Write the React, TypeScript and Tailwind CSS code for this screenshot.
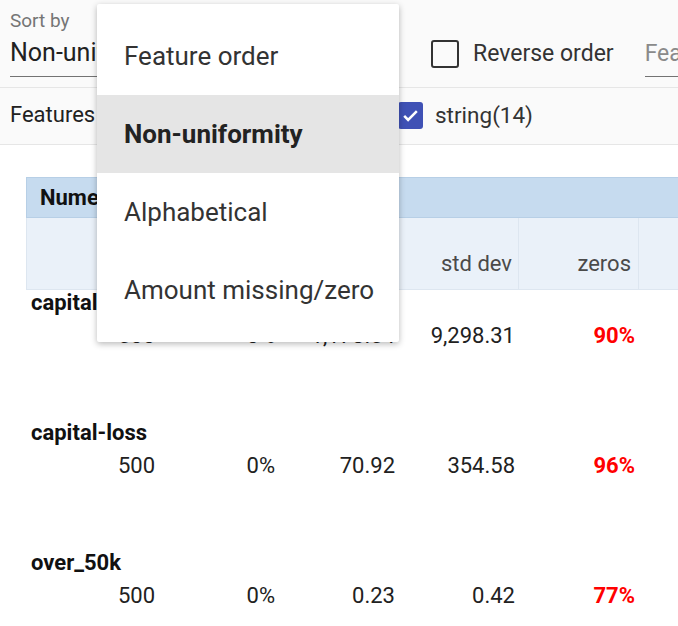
import React from "react";

const font = { fontFamily: "Roboto, 'Noto Sans', Arial, sans-serif" };

function Box({ checked }: { checked?: boolean }) {
  if (checked) {
    return (
      <div className="w-[25px] h-[27px] shrink-0 rounded-[3px] bg-[#3f51b5] flex items-center justify-center">
        <svg width="19" height="19" viewBox="0 0 24 24">
          <path d="M4 12.5l5 5L20 6.5" fill="none" stroke="#fff" strokeWidth="3.2" />
        </svg>
      </div>
    );
  }
  return <div className="w-[28px] h-[28px] shrink-0 rounded-[3px] border-[2.5px] border-[#333]" />;
}

const rows = [
  { name: "capital-gain", v: ["500", "0%", "1,178.54", "9,298.31", "90%"] },
  { name: "capital-loss", v: ["500", "0%", "70.92", "354.58", "96%"] },
  { name: "over_50k", v: ["500", "0%", "0.23", "0.42", "77%"] },
];

const heads = ["count", "missing", "mean", "std dev", "zeros"];

export default function App() {
  return (
    <div style={font} className="relative w-[678px] h-[626px] overflow-hidden bg-white text-[#212121]">
      {/* controls */}
      <div className="bg-[#fafafa]">
        <div className="h-[88px] flex items-start border-b border-[#e6e6e6]">
          <div className="pl-[10px] pt-[10px] w-[390px] shrink-0">
            <div className="text-[19px] leading-[22px] text-[#757575]">Sort by</div>
            <div className="mt-[6px] text-[25px] leading-[30px] text-[#212121] whitespace-nowrap">Non-uniformity</div>
            <div className="mt-[8px] h-px bg-[#737373] w-[370px]" />
          </div>
          <div className="flex items-center pt-[40px] ml-[41px] shrink-0">
            <Box />
            <span className="ml-[14px] text-[23px] leading-[28px] text-[#333] whitespace-nowrap">Reverse order</span>
          </div>
          <div className="ml-[31px] pt-[39px] shrink-0">
            <div className="text-[23px] leading-[30px] text-[#8a8a8a] whitespace-nowrap">Feature search</div>
            <div className="mt-[7px] h-px bg-[#737373] w-[200px]" />
          </div>
        </div>
        <div className="h-[57px] flex items-center border-b border-[#e6e6e6] pb-[2px]">
          <span className="pl-[10px] text-[22px] leading-[28px] text-[#212121] w-[398px] shrink-0">Features</span>
          <Box checked />
          <span className="ml-[12px] text-[22.5px] leading-[28px] text-[#333] whitespace-nowrap">string(14)</span>
        </div>
      </div>

      {/* table */}
      <div className="ml-[26px] mt-[32px] w-[780px]">
        <div className="h-[41px] bg-[#c6dbef] border border-[#b7cfe6] flex items-center pl-[13px]">
          <span className="text-[22px] font-bold text-[#111] whitespace-nowrap">Numeric Features (6)</span>
        </div>
        <div className="h-[72px] bg-[#eaf1f9] border-b border-l border-[#dde6f0] flex text-[22px] leading-[24px] text-[#4a4a4a]">
          <div className="w-[11px] shrink-0 h-full" />
          {heads.map((h, i) => (
            <div
              key={h}
              className={
                "w-[120px] shrink-0 h-full flex items-end justify-end pb-[13px] whitespace-nowrap " +
                (i === 0 ? "pr-[3px] " : "border-l border-[#dde6f0] ") +
                (i === 4 ? "pr-[7px]" : i === 0 ? "" : "pr-[6px]")
              }
            >
              {h}
            </div>
          ))}
          <div className="w-[120px] shrink-0 h-full border-l border-[#dde6f0]" />
        </div>
        {rows.map((r) => (
          <div key={r.name} className="h-[130px]">
            <div className="text-[22px] leading-[26px] font-bold text-[#111] ml-[5px]">{r.name}</div>
            <div className="flex mt-[7px] text-[22px] leading-[26px]">
              {r.v.map((x, i) => (
                <div
                  key={i}
                  className={
                    (i === 0 ? "w-[132px] " : "w-[120px] ") +
                    "shrink-0 text-right pr-[3px] whitespace-nowrap " +
                    (i === 4 ? "text-[#ff0000] font-bold" : "text-[#212121]")
                  }
                >
                  {x}
                </div>
              ))}
            </div>
          </div>
        ))}
      </div>

      {/* dropdown menu */}
      <div className="absolute left-[97px] top-[4px] w-[302px] bg-white rounded-[2px] py-[13px] shadow-[0_2px_6px_rgba(0,0,0,0.28)]">
        {["Feature order", "Non-uniformity", "Alphabetical", "Amount missing/zero"].map((t, i) => (
          <div
            key={t}
            className={
              "h-[78px] flex items-center pl-[27px] text-[26px] whitespace-nowrap " +
              (i === 1 ? "bg-[#e5e5e5] font-bold text-[#222]" : "text-[#333]")
            }
          >
            {t}
          </div>
        ))}
      </div>
    </div>
  );
}
